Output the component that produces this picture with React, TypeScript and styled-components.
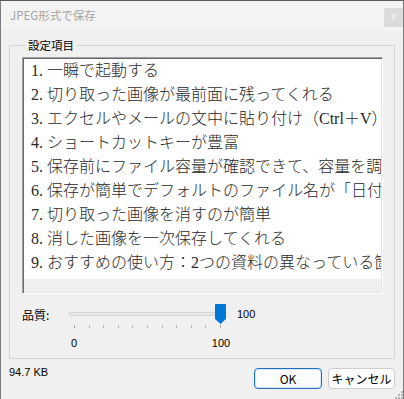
import React from 'react';
import styled, { createGlobalStyle } from 'styled-components';

const GlobalStyle = createGlobalStyle`
  html, body {
    margin: 0;
    padding: 0;
    background: #f0f0f0;
  }
  body {
    font-family: "Noto Sans CJK JP", "Liberation Sans", sans-serif;
    color: #000;
  }
`;

const Window = styled.div`
  position: relative;
  width: 404px;
  height: 399px;
  box-sizing: border-box;
  border: 1px solid #7c7c7c;
  border-top-color: #5a5a5a;
  border-bottom: none;
  background: #f0f0f0;
  display: flex;
  flex-direction: column;
  overflow: hidden;
`;

const TitleBar = styled.div`
  height: 30px;
  background: #f3f3f3;
  display: flex;
  align-items: flex-start;
  justify-content: space-between;
  padding-left: 9px;
`;

const Title = styled.div`
  font-size: 11.5px;
  line-height: 28px;
  color: #a3a3a3;
`;

const CloseButton = styled.div`
  width: 19px;
  height: 19px;
  margin-top: 7px;
  background: #dcdcdc;
  color: #f4f4f4;
  font-family: "Liberation Sans", sans-serif;
  font-size: 10px;
  line-height: 17px;
  text-align: center;
`;

const Body = styled.div`
  flex: 1;
  display: flex;
  flex-direction: column;
  padding: 6px 8px 0 8px;
`;

const GroupBox = styled.fieldset`
  margin: 0;
  height: 322px;
  box-sizing: border-box;
  border: 1px solid #d6d6d6;
  padding: 4px 11px 0 12px;
  min-width: 0;
`;

const Legend = styled.legend`
  font-size: 11.5px;
  line-height: 16px;
  padding: 0 2px;
  margin-left: 4px;
`;

const TextBox = styled.div`
  height: 237px;
  box-sizing: border-box;
  border: 1px solid;
  border-color: #a0a0a0 #ffffff #ffffff #a0a0a0;
  box-shadow: inset 1px 1px 0 #6a6a6a, inset -1px -1px 0 #e3e3e3;
  background: #f0f0f0;
  padding: 1px;
  display: flex;
  flex-direction: column;
`;

const TextArea = styled.div`
  height: 220px;
  background: #fff;
  overflow: hidden;
  padding-left: 7px;
`;

const Line = styled.div`
  font-family: "Liberation Serif", "Noto Sans CJK JP", serif;
  font-weight: 300;
  font-size: 16px;
  line-height: 24px;
  color: #2a2a2a;
  white-space: nowrap;
`;

const SliderRow = styled.div`
  display: flex;
  align-items: center;
  height: 20px;
  margin-top: 10px;
`;

const SliderLabel = styled.div`
  width: 47px;
  font-size: 12px;
`;

const SliderArea = styled.div`
  position: relative;
  width: 160px;
  height: 20px;
  display: flex;
  align-items: center;
`;

const Track = styled.div`
  width: 156px;
  height: 4px;
  box-sizing: border-box;
  background: #e7e7e7;
  border: 1px solid #d6d6d6;
`;

const Thumb = styled.svg`
  position: absolute;
  left: 146px;
  top: 0;
`;

const Numeric = styled.div`
  font-family: "Liberation Sans", sans-serif;
  font-size: 11px;
  font-weight: 400;
  color: #000;
`;

const SliderValue = styled(Numeric)`
  margin-left: 8px;
`;

const TickRow = styled.div`
  display: flex;
  justify-content: space-between;
  width: 147px;
  margin-left: 52px;
  margin-top: 1px;
`;

const Tick = styled.div<{ $end?: boolean }>`
  width: 1px;
  height: 3px;
  background: ${(p) => (p.$end ? '#a8a8a8' : '#b8b8b8')};
`;

const TickLabels = styled.div`
  display: flex;
  justify-content: space-between;
  width: 167px;
  margin-left: 42px;
  margin-top: 8px;
`;

const TickLabel = styled(Numeric)`
  width: 20px;
  text-align: center;
  line-height: 14px;
`;

const Footer = styled.div`
  display: flex;
  align-items: flex-start;
  padding-top: 6px;
`;

const SizeLabel = styled(Numeric)`
  line-height: 14px;
`;

const Buttons = styled.div`
  margin-left: auto;
  margin-top: 3px;
  display: flex;
  gap: 6px;
`;

const Button = styled.div<{ $primary?: boolean; $w: number }>`
  width: ${(p) => p.$w}px;
  height: 21px;
  box-sizing: border-box;
  border-radius: 4px;
  background: #fdfdfd;
  border: 1px solid ${(p) => (p.$primary ? '#1f6fc1' : '#cfcfcf')};
  box-shadow: ${(p) => (p.$primary ? 'inset 0 0 0 1px #d5e6f7' : 'none')};
  font-size: 12px;
  line-height: 19px;
  text-align: center;
  color: #000;
`;

const Grip = styled.svg`
  position: absolute;
  right: 0;
  bottom: 0;
`;

// the list box clips long lines at its right edge, as in the original dialog
const items = [
  '1. 一瞬で起動する',
  '2. 切り取った画像が最前面に残ってくれる',
  '3. エクセルやメールの文中に貼り付け（Ctrl＋V）',
  '4. ショートカットキーが豊富',
  '5. 保存前にファイル容量が確認できて、容量を調',
  '6. 保存が簡単でデフォルトのファイル名が「日付',
  '7. 切り取った画像を消すのが簡単',
  '8. 消した画像を一次保存してくれる',
  '9. おすすめの使い方：2つの資料の異なっている箇',
];

export default function App() {
  return (
    <>
      <GlobalStyle />
      <Window>
        <TitleBar>
          <Title>JPEG形式で保存</Title>
          <CloseButton>x</CloseButton>
        </TitleBar>
        <Body>
          <GroupBox>
            <Legend>設定項目</Legend>
            <TextBox>
              <TextArea>
                {items.map((t) => (
                  <Line key={t}>{t}</Line>
                ))}
              </TextArea>
            </TextBox>
            <SliderRow>
              <SliderLabel>品質:</SliderLabel>
              <SliderArea>
                <Track />
                <Thumb width="11" height="20" viewBox="0 0 11 20">
                  <path d="M1 0 H10 Q11 0 11 1 V15 L5.5 20 L0 15 V1 Q0 0 1 0 Z" fill="#0078d7" />
                </Thumb>
              </SliderArea>
              <SliderValue>100</SliderValue>
            </SliderRow>
            <TickRow>
              {Array.from({ length: 11 }).map((_, i) => (
                <Tick key={i} $end={i === 0 || i === 10} />
              ))}
            </TickRow>
            <TickLabels>
              <TickLabel>0</TickLabel>
              <TickLabel>100</TickLabel>
            </TickLabels>
          </GroupBox>
          <Footer>
            <SizeLabel>94.7 KB</SizeLabel>
            <Buttons>
              <Button $primary $w={68}>OK</Button>
              <Button $w={67}>キャンセル</Button>
            </Buttons>
          </Footer>
        </Body>
        <Grip width="9" height="9" viewBox="0 0 9 9">
          {[
            [6, 0],
            [6, 3],
            [3, 3],
            [6, 6],
            [3, 6],
            [0, 6],
          ].map(([x, y]) => (
            <rect key={`${x}-${y}`} x={x + 1} y={y + 1} width="2" height="2" fill="#b4b4b4" />
          ))}
        </Grip>
      </Window>
    </>
  );
}
